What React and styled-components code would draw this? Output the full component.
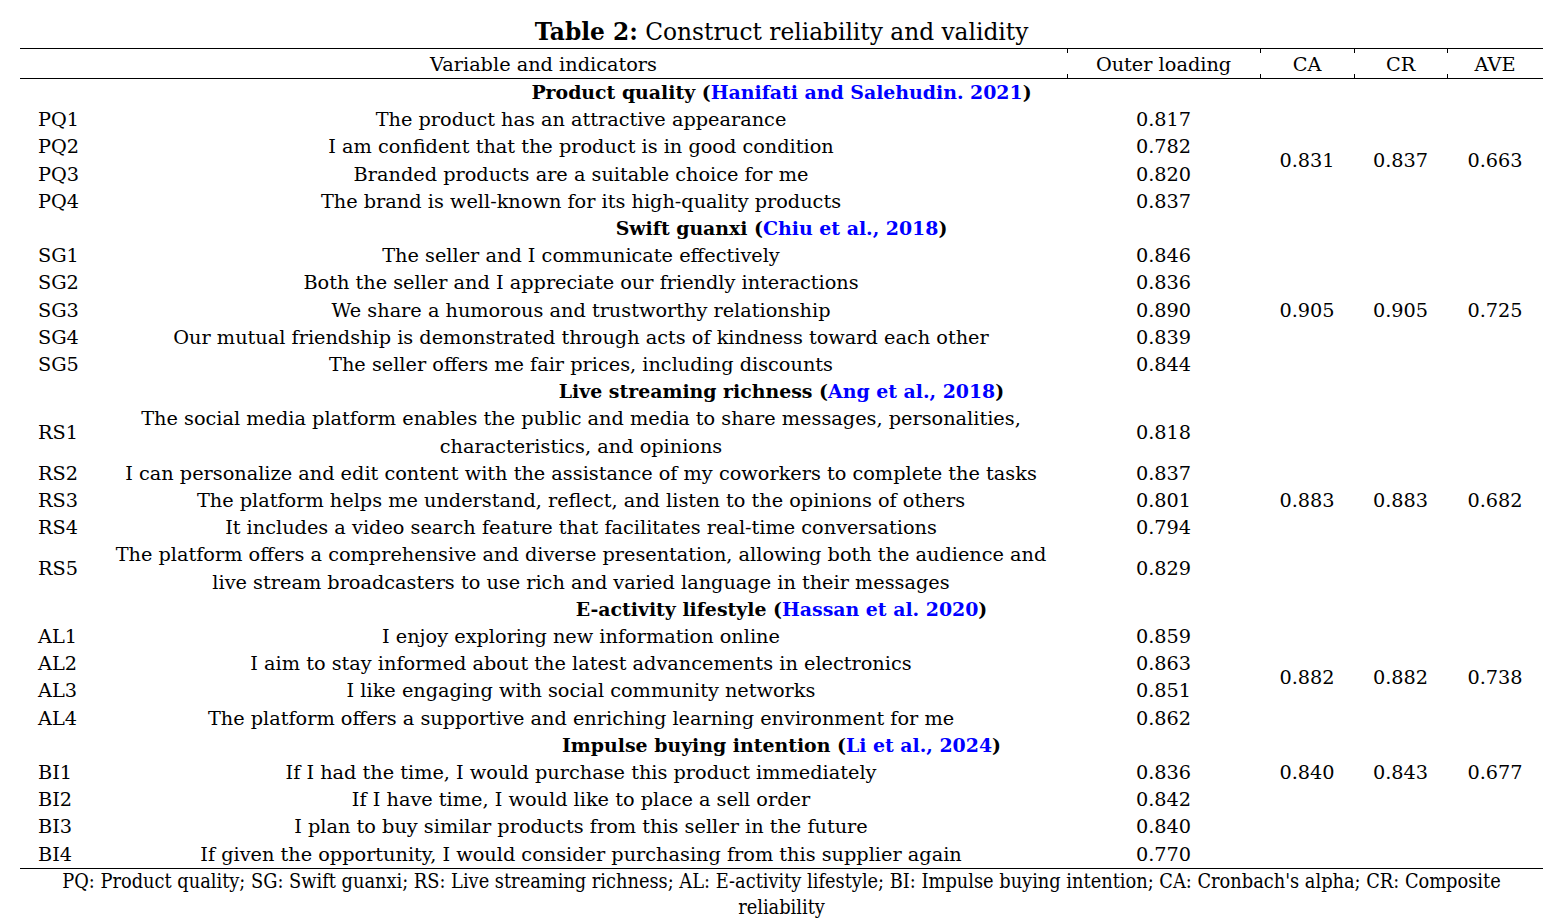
import React from 'react';
import styled, { createGlobalStyle } from 'styled-components';

const GlobalStyle = createGlobalStyle`
    html, body {
        margin: 0;
        padding: 0;
        background: #ffffff;
    }
    body {
        font-family: 'DejaVu Serif', 'Liberation Serif', serif;
        color: #000;
    }
`;

const groups = [
    {
        title: 'Product quality',
        cite: 'Hanifati and Salehudin. 2021',
        stats: ['0.831', '0.837', '0.663'],
        items: [
            ['PQ1', 'The product has an attractive appearance', '0.817'],
            ['PQ2', 'I am confident that the product is in good condition', '0.782'],
            ['PQ3', 'Branded products are a suitable choice for me', '0.820'],
            ['PQ4', 'The brand is well-known for its high-quality products', '0.837'],
        ],
    },
    {
        title: 'Swift guanxi',
        cite: 'Chiu et al., 2018',
        stats: ['0.905', '0.905', '0.725'],
        items: [
            ['SG1', 'The seller and I communicate effectively', '0.846'],
            ['SG2', 'Both the seller and I appreciate our friendly interactions', '0.836'],
            ['SG3', 'We share a humorous and trustworthy relationship', '0.890'],
            ['SG4', 'Our mutual friendship is demonstrated through acts of kindness toward each other', '0.839'],
            ['SG5', 'The seller offers me fair prices, including discounts', '0.844'],
        ],
    },
    {
        title: 'Live streaming richness',
        cite: 'Ang et al., 2018',
        stats: ['0.883', '0.883', '0.682'],
        items: [
            ['RS1', ['The social media platform enables the public and media to share messages, personalities,', 'characteristics, and opinions'], '0.818'],
            ['RS2', 'I can personalize and edit content with the assistance of my coworkers to complete the tasks', '0.837'],
            ['RS3', 'The platform helps me understand, reflect, and listen to the opinions of others', '0.801'],
            ['RS4', 'It includes a video search feature that facilitates real-time conversations', '0.794'],
            ['RS5', ['The platform offers a comprehensive and diverse presentation, allowing both the audience and', 'live stream broadcasters to use rich and varied language in their messages'], '0.829'],
        ],
    },
    {
        title: 'E-activity lifestyle',
        cite: 'Hassan et al. 2020',
        stats: ['0.882', '0.882', '0.738'],
        items: [
            ['AL1', 'I enjoy exploring new information online', '0.859'],
            ['AL2', 'I aim to stay informed about the latest advancements in electronics', '0.863'],
            ['AL3', 'I like engaging with social community networks', '0.851'],
            ['AL4', 'The platform offers a supportive and enriching learning environment for me', '0.862'],
        ],
    },
    {
        title: 'Impulse buying intention',
        cite: 'Li et al., 2024',
        stats: ['0.840', '0.843', '0.677'],
        topOnly: true,
        items: [
            ['BI1', 'If I had the time, I would purchase this product immediately', '0.836'],
            ['BI2', 'If I have time, I would like to place a sell order', '0.842'],
            ['BI3', 'I plan to buy similar products from this seller in the future', '0.840'],
            ['BI4', 'If given the opportunity, I would consider purchasing from this supplier again', '0.770'],
        ],
    },
];

const App = () => {
    return (
        <Page>
            <GlobalStyle />
            <Caption>
                <b>Table 2:</b> Construct reliability and validity
            </Caption>
            <Table>
                <colgroup>
                    <col style={{ width: 75 }} />
                    <col style={{ width: 972 }} />
                    <col style={{ width: 193 }} />
                    <col style={{ width: 94 }} />
                    <col style={{ width: 93 }} />
                    <col style={{ width: 96 }} />
                </colgroup>
                <thead>
                    <tr>
                        <Head colSpan={2}>Variable and indicators</Head>
                        <Head $tick>Outer loading</Head>
                        <Head $tick>CA</Head>
                        <Head $tick>CR</Head>
                        <Head $tick>AVE</Head>
                    </tr>
                </thead>
                <tbody>
                    {groups.map((g) => (
                        <React.Fragment key={g.title}>
                            <tr>
                                <GroupCell colSpan={6}>
                                    {g.title} (<Cite>{g.cite}</Cite>)
                                </GroupCell>
                            </tr>
                            {g.items.map(([code, text, load], i) => (
                                <tr key={code}>
                                    <Code>{code}</Code>
                                    <Indicator>
                                        {Array.isArray(text) ? (
                                            <>
                                                {text[0]}
                                                <br />
                                                {text[1]}
                                            </>
                                        ) : (
                                            text
                                        )}
                                    </Indicator>
                                    <Value>{load}</Value>
                                    {g.topOnly
                                        ? i === 0
                                            ? g.stats.map((s, k) => <Value key={k}>{s}</Value>)
                                            : [0, 1, 2].map((k) => <Value key={k} />)
                                        : i === 0 &&
                                          g.stats.map((s, k) => (
                                              <Value key={k} rowSpan={g.items.length}>
                                                  {s}
                                              </Value>
                                          ))}
                                </tr>
                            ))}
                        </React.Fragment>
                    ))}
                </tbody>
            </Table>
            <Note>
                PQ: Product quality; SG: Swift guanxi; RS: Live streaming richness; AL: E-activity lifestyle; BI: Impulse buying
                intention; CA: Cronbach's alpha; CR: Composite
                <br />
                reliability
            </Note>
        </Page>
    );
};

var Page = styled.div`
    width: 1553px;
    padding: 16px 10px 0 20px;
    box-sizing: border-box;
`;

var Caption = styled.div`
    text-align: center;
    font-size: 23.3px;
    line-height: 32px;
    b {
        font-weight: 700;
    }
`;

var Table = styled.table`
    width: 1523px;
    border-collapse: collapse;
    table-layout: fixed;
    font-size: 19.3px;
    border-top: 1.5px solid #000;
    border-bottom: 1.5px solid #000;
`;

var Head = styled.th`
    position: relative;
    font-weight: 400;
    text-align: center;
    height: 27px;
    padding: 2px 0 0;
    line-height: 27px;
    border-bottom: 1.5px solid #000;

    &::before,
    &::after {
        content: ${(p) => (p.$tick ? "''" : 'none')};
        position: absolute;
        left: 0;
        width: 1px;
        height: 4px;
        background: #000;
    }
    &::before {
        top: 0;
    }
    &::after {
        bottom: 0;
    }
`;

var GroupCell = styled.td`
    text-align: center;
    font-weight: 700;
    font-size: 18.9px;
    height: 27.2px;
    padding: 0;
    line-height: 27.2px;
`;

var Cite = styled.span`
    color: #0000ff;
`;

var Code = styled.td`
    padding: 0 0 0 18px;
    line-height: 27.2px;
    white-space: nowrap;
    vertical-align: middle;
`;

var Indicator = styled.td`
    text-align: center;
    white-space: nowrap;
    padding: 0;
    line-height: 27.2px;
`;

var Value = styled.td`
    text-align: center;
    padding: 0;
    line-height: 27.2px;
    vertical-align: middle;
`;

var Note = styled.div`
    text-align: center;
    font-family: 'DejaVu Serif Condensed', 'DejaVu Serif', serif;
    font-stretch: condensed;
    font-size: 19.8px;
    line-height: 26px;
    width: 1523px;
`;

export default App;
